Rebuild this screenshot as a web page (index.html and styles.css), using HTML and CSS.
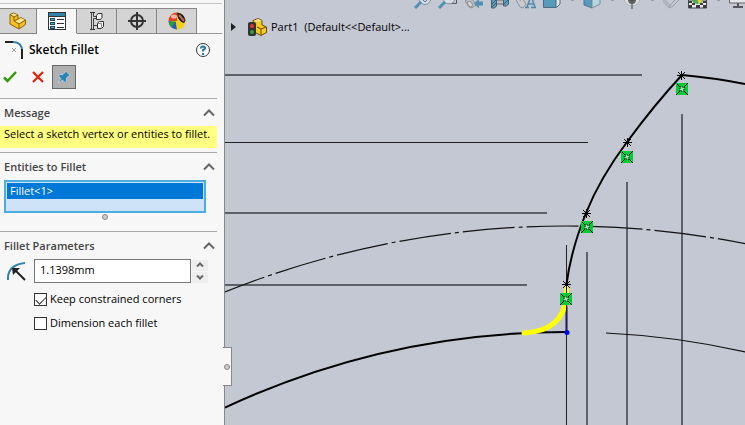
FILE: index.html
```html
<!DOCTYPE html>
<html lang="en">
<head>
<meta charset="utf-8">
<title>Sketch Fillet</title>
<link rel="stylesheet" href="styles.css">
</head>
<body>
<aside class="panel">
  <nav class="tabs" aria-label="Managers">
    <button class="tab" aria-label="Feature tree">
      <svg width="18" height="18" viewBox="0 0 18 18"><path d="M1 2.500L4.500 1 9 3v4l3-1.500L16.500 8v4.500L10 17 1 12z" fill="#f3c02a" stroke="#8a6205" stroke-linejoin="round"/><path d="M1.500 3l3-1.500L8.500 3 5 5zM6.500 9.500L12 6l4 2-5.500 3.500z" fill="#ffe590"/><path d="M1 2.500L5 5l4-2M5 5v4l5 3 6.500-4M10 12v5M9 7L5 9" fill="none" stroke="#8a6205"/></svg>
    </button>
    <button class="tab active" aria-label="Property manager">
      <svg width="18" height="18" viewBox="0 0 18 18"><rect x=".5" y=".5" width="17" height="17" fill="#fff" stroke="#333"/><path d="M1 1h16v3H1z" fill="#2f83ac"/><path d="M0 4.500h18" stroke="#333"/><path d="M2 6h5v3H2zM2 10h5v3H2zM2 14h5v3H2z" fill="#1f4a5f"/><path d="M3 7.500h3M3 11.500h3M3 15.500h3" stroke="#4aa5cd"/><path d="M9 7.500h7M9 11.500h7M9 15.500h7" stroke="#333"/></svg>
    </button>
    <button class="tab" aria-label="Configurations">
      <svg width="18" height="18" viewBox="0 0 18 18"><path d="M3.500 1v16M5.500 1v3.500H8M5.500 17V6.500H8M5.500 13.500h4" fill="none" stroke="#444"/><path d="M2 .5h5M2 17.500h5" stroke="#333"/><path d="M8.500 3.500l1.500-2h4v4l-1.500 2h-4zM9.500 11l2-1.500h4v5l-2 2h-4z" fill="#f2f2f2" stroke="#333"/><path d="M9.500 11.500h4v4" fill="none" stroke="#888"/></svg>
    </button>
    <button class="tab" aria-label="Dimensions">
      <svg width="18" height="18" viewBox="0 0 18 18"><circle cx="9" cy="9" r="6" fill="none" stroke="#333" stroke-width="2"/><path d="M9 0v18M0 9h18" stroke="#333" stroke-width="2"/></svg>
    </button>
    <button class="tab" aria-label="Display">
      <svg width="18" height="18" viewBox="0 0 18 18"><circle cx="9" cy="9" r="8.500" fill="#f6cf18"/><path d="M9 9V.5A8.500 8.500 0 0 0 .5 9z" fill="#d94328"/><path d="M.5 9A8.500 8.500 0 0 0 9 17.500L8 10z" fill="#2459c9"/><path d="M8 10l1 7.500q5 0 7.500-4L11 9z" fill="#f6cf18"/><path d="M.7 10L8 9.500 3.500 15.500Q1 13 .7 10z" fill="#2b9a38"/><path d="M9 .5q7 .5 8.500 8L16 11Q9 9 9 .5z" fill="#241414"/><path d="M11 3l5 6" stroke="#b87068" stroke-width="2"/><ellipse cx="6" cy="4.500" rx="3" ry="2" fill="#fff" opacity=".6"/></svg>
    </button>
  </nav>

  <header class="title">
    <svg width="20" height="20" viewBox="0 0 20 20"><path d="M1 2h9" stroke="#222" stroke-width="2"/><path d="M9 2q9 0 9 9" fill="none" stroke="#2f83ac" stroke-width="2"/><path d="M18 9v10" stroke="#222" stroke-width="2"/><path d="M8 8l4 4M12 8l-4 4" stroke="#999"/></svg>
    <h1>Sketch Fillet</h1>
    <button class="help" aria-label="Help">
      <svg width="14" height="14" viewBox="0 0 14 14"><circle cx="7" cy="7" r="6.500" fill="#fff" stroke="#333"/><path d="M5 5.500Q5 3.500 7 3.500t2 1.500Q9 6.500 7 7v1.500" fill="none" stroke="#2476a0" stroke-width="2"/><path d="M6 10h2v2H6z" fill="#2476a0"/></svg>
    </button>
  </header>

  <div class="actions">
    <button aria-label="OK"><svg width="14" height="12" viewBox="0 0 14 12"><path d="M1 6.500L4.500 10 13 1" fill="none" stroke="#2f9a08" stroke-width="2.500"/></svg></button>
    <button aria-label="Cancel"><svg width="12" height="12" viewBox="0 0 12 12"><path d="M1 1l10 10M11 1L1 11" stroke="#e02306" stroke-width="2.200"/></svg></button>
    <button class="pin" aria-label="Keep visible"><svg width="14" height="14" viewBox="0 0 14 14"><path d="M8.500 1l4.500 4.500-1.500.5L9.500 8v3l-1.500 1.500L5.500 10 1 13l3-4.500L1.500 6 3 4.500h3l2-2z" fill="#2884b3" stroke="#e0ecf2" stroke-width=".5"/></svg></button>
  </div>

  <section class="group">
    <button class="group-head">Message <svg class="chev" width="12" height="8" viewBox="0 0 12 8"><path d="M1 6.500l5-5 5 5"/></svg></button>
    <p class="message">Select a sketch vertex or entities to fillet.</p>
  </section>

  <section class="group">
    <button class="group-head">Entities to Fillet <svg class="chev" width="12" height="8" viewBox="0 0 12 8"><path d="M1 6.500l5-5 5 5"/></svg></button>
    <ul class="entities"><li>Fillet&lt;1&gt;</li></ul>
    <span class="grip"></span>
  </section>

  <section class="group">
    <button class="group-head">Fillet Parameters <svg class="chev" width="12" height="8" viewBox="0 0 12 8"><path d="M1 6.500l5-5 5 5"/></svg></button>
    <div class="radius">
      <svg width="20" height="20" viewBox="0 0 20 20"><path d="M2 19Q1 4 19 2" fill="none" stroke="#2f83ac" stroke-width="2"/><path d="M19 19L9 9" stroke="#222" stroke-width="2"/><path d="M6 7h8l-7 7z" fill="#222"/></svg>
      <input type="text" value="1.1398mm" aria-label="Fillet radius">
      <span class="spin">
        <button aria-label="Increase"><svg class="chev" width="8" height="6" viewBox="0 0 8 6"><path d="M1 4.500l3-3 3 3"/></svg></button>
        <button aria-label="Decrease"><svg class="chev" width="8" height="6" viewBox="0 0 8 6"><path d="M1 1.500l3 3 3-3"/></svg></button>
      </span>
    </div>
    <label class="check"><input type="checkbox" checked>Keep constrained corners</label>
    <label class="check"><input type="checkbox">Dimension each fillet</label>
  </section>
  <button class="handle" aria-label="Collapse panel"><span class="grip"></span></button>
</aside>

<main class="view">
  <svg class="sketch" aria-label="Sketch">
    <defs>
      <path id="star" d="M-4 .5H5M.5-4V5M-3-3L4 4M4-3L-3 4" stroke="#000"/>
      <g id="rel"><rect x="-6" y="-6" width="12" height="12" fill="#00cc33"/><path d="M-6 6l4-4M6-6L2-2M6 6L2 2M-5-5l3 3" stroke="#000"/><rect x="-2" y="-2" width="4" height="4" fill="#9fe0ae" stroke="#000" stroke-dasharray="1 1"/></g>
    </defs>
    <g transform="translate(-225 0)" fill="none">
      <path d="M225 75H642M225 213H547M225 285H527M587 252V2000M627 182V2000M682 114V2000" stroke="#5f6168" stroke-width="2"/>
      <path d="M225 142.500H588M566.500 245V2000" stroke="#222"/>
      <path d="M225 292A914 914 0 0 1 566 226A914 914 0 0 1 1400 766" stroke="#111" stroke-width="1.200" stroke-dasharray="52 4 4 4" stroke-dashoffset="10"/>
      <path d="M606 333A808 808 0 0 1 1300 800" stroke="#111" stroke-width="1.200"/>
      <path d="M225 407.500A808 808 0 0 1 567 332" stroke="#000" stroke-width="2"/>
      <path d="M745 84Q715 78 682 75Q655 104 627 142Q600 178 586 213Q571 250 566.500 284" stroke="#000" stroke-width="2"/>
      <path d="M566.500 284V332" stroke="#0a0a70" stroke-width="2"/>
      <path d="M566.500 288V297Q563 331 524 333" stroke="#ff0" stroke-width="5" stroke-linecap="round"/>
      <path d="M566.500 284V332" stroke="#222"/>
      <circle cx="567" cy="332.500" r="2.500" fill="#00f"/>
      <use href="#star" x="681" y="75"/><use href="#star" x="627" y="142"/><use href="#star" x="586" y="213"/><use href="#star" x="566" y="284"/>
      <use href="#rel" x="682" y="89"/><use href="#rel" x="627" y="157"/><use href="#rel" x="587" y="227"/><use href="#rel" x="566" y="299"/>
    </g>
  </svg>

  <div class="toolbar">
    <button aria-label="Zoom to fit"><svg width="18" height="18" viewBox="0 0 18 18"><circle cx="12" cy="8" r="5.500" fill="#d9dfe7" stroke="#7d858f"/><path d="M8 11l-6 6" stroke="#3f88ae" stroke-width="3"/><path d="M10 9l2 2 2-2" fill="none" stroke="#3f6f88"/></svg></button>
    <button aria-label="Zoom to area"><svg width="20" height="18" viewBox="0 0 20 18"><path d="M9 12.500h9.500V6" fill="none" stroke="#444"/><circle cx="11" cy="7" r="6" fill="#d9dfe7" stroke="#7d858f"/><path d="M7 11l-6 6" stroke="#3f88ae" stroke-width="3"/></svg></button>
    <button aria-label="Previous view"><svg width="18" height="18" viewBox="0 0 18 18"><path d="M0 10l6-4 5 8-4 3-3-1z" fill="#b9bcc2" stroke="#85898f"/><ellipse cx="5" cy="13" rx="2" ry="3" fill="#ddd" stroke="#888" transform="rotate(-35 5 13)"/><path d="M9 12.500l5-5v3h4v4h-4v3z" fill="#3f88ae"/></svg></button>
    <button aria-label="Section view"><svg width="18" height="18" viewBox="0 0 18 18"><path d="M5 9h8v4H5z" fill="#b9bcc2" stroke="#555"/><path d="M.5 6h5v9l-2 2h-3zM12.500 6h5v7l-2 2h-3z" fill="#4a94b9" stroke="#2c4f61"/><path d="M1 13l4-4M1 16l4-4M13 13l4-4" stroke="#2c4f61"/></svg></button>
    <button aria-label="Dynamic annotation views"><svg width="20" height="18" viewBox="0 0 20 18"><path d="M0 9l5-4 5 8-3 4-3-1z" fill="#c9cbd0" stroke="#85898f"/><path d="M1 8l3-1 1 3z" fill="#d65b3c"/><path d="M9 16.500h4M15 16.500h5M11 16l4-11 4 11M12.500 13h5" fill="none" stroke="#3a7fa5" stroke-width="1.500"/></svg></button>
    <button aria-label="View orientation"><svg width="18" height="18" viewBox="0 0 18 18"><path d="M12 2h5v11l-3 3h-2z" fill="#e7e9ed" stroke="#555"/><path d="M.5 3.500h12.500v13H.5z" fill="#4592b9" stroke="#2f5f78"/></svg></button>
    <i></i>
    <button aria-label="Display style"><svg width="18" height="18" viewBox="0 0 18 18"><path d="M1 2h8v15l-8-3z" fill="#4592b9" stroke="#3b6d86"/><path d="M9 2h8v11l-8 4z" fill="#b8d8e6" stroke="#6d8492"/></svg></button>
    <i></i>
    <button aria-label="Hide or show items"><svg width="18" height="18" viewBox="0 0 18 18"><circle cx="9" cy="7" r="8" fill="#e4e4e6" stroke="#a9acb3"/><circle cx="9" cy="9" r="4" fill="#555"/><path d="M9 7v11M6 9h6" stroke="#333"/></svg></button>
    <i></i>
    <button aria-label="Edit appearance"><svg width="18" height="18" viewBox="0 0 18 18"><path d="M0 9l7 7" stroke="#adb0b8" stroke-width="4"/><path d="M6 17l2-4 8-8 2 2-8 8z" fill="#c2c5cc" stroke="#989ba4"/></svg></button>
    <button aria-label="Apply scene"><svg width="20" height="18" viewBox="0 0 20 18"><path d="M.5 9h18v8H.5z" fill="#eee" stroke="#333"/><path d="M1 10h3v2H1zM15 10h3v2h-3zM4 12h3v2H4zM12 12h3v2h-3zM1 14h3v3H1zM8 14h4v3H8zM15 14h3v3h-3z" fill="#222"/><circle cx="9.500" cy="7" r="6" fill="#38a83e"/><path d="M9 7h6.500q-2 5-5 6z" fill="#e9d02a"/></svg></button>
    <i></i>
    <button aria-label="View settings"><svg width="18" height="18" viewBox="0 0 18 18"><path d="M.5 1h17v11H.5z" fill="#e9ebee" stroke="#555"/><path d="M9 12v4M4 16h10" stroke="#444" stroke-width="2"/></svg></button>
  </div>

  <div class="tree">
    <svg width="6" height="8" viewBox="0 0 6 8"><path d="M0 0l5 4-5 4z" fill="#222"/></svg>
    <svg width="19" height="18" viewBox="0 0 19 18"><path d="M5 2.500L10 .5l4 2V7l4.500 2v5.500L13 17.500l-6-3z" fill="#f4ca25" stroke="#6b4b05"/><path d="M5.500 3L10 1l3.500 1.500L10 4z" fill="#ffe890"/><path d="M9 9l4 2 5-2M13 11v6" fill="none" stroke="#6b4b05"/><rect x="0" y="4" width="8" height="14" rx="2" fill="#333"/><circle cx="4" cy="8" r="2" fill="#e23a30"/><circle cx="4" cy="14" r="2" fill="#35a040"/></svg>
    <span>Part1&nbsp; (Default&lt;&lt;Default&gt;...</span>
  </div>
</main>
</body>
</html>
```
FILE: styles.css
```css
* { box-sizing: border-box; }

body {
  margin: 0;
  min-height: 100vh;
  display: flex;
  font: 11px/16px "Open Sans", "Noto Sans", sans-serif;
  color: #000;
  background: #c4c8d3;
}

button { font: inherit; color: inherit; border: 0; padding: 0; background: none; }
svg { display: block; flex: none; }

.panel {
  position: relative;
  z-index: 1;
  width: 225px;
  flex: none;
  background: #f7f7f7;
  border-right: 1px solid #888;
  padding-top: 3px;
}

.tabs {
  display: flex;
  margin-right: 2px;
  padding-top: 4px;
  border-top: 1px solid #c4c4c4;
  box-shadow: inset 0 -1px #999;
}
.tab {
  display: flex;
  align-items: center;
  justify-content: center;
  width: 40px;
  height: 26px;
  background: #d4d4d4;
  border: 1px solid #888;
  border-left: 0;
}
.tab:first-child { width: 37px; }
.tab.active { background: #f7f7f7; border-bottom-color: #f7f7f7; }

.title { display: flex; align-items: center; padding: 6px 14px 0 4px; }
.title h1 { flex: 1; margin: 0 0 0 5px; font-size: 12px; font-weight: 600; }
.help { margin-bottom: 1px; }

.actions { display: flex; align-items: center; padding: 5px 3px 9px; }
.actions button + button { margin-left: 15px; }
.actions .pin {
  display: grid;
  place-items: center;
  width: 24px;
  height: 24px;
  margin-left: 8px;
  background: #b0b0b0;
  border: 1px solid #666;
}
.actions .pin:last-child { margin-left: 8px; }

.group { margin-right: 7px; border-top: 1px solid #aaa; }
.group-head {
  display: flex;
  align-items: center;
  justify-content: space-between;
  width: 100%;
  height: 23px;
  padding: 5px 2px 0 4px;
  font-weight: 600;
  color: #444;
}
.chev { fill: none; stroke: #666; stroke-width: 2; }

.message {
  margin: 4px 0;
  padding: 0 4px 6px;
  white-space: nowrap;
  background: #ffff80;
}

.entities {
  height: 33px;
  margin: 4px 11px 1px 4px;
  padding: 1px;
  list-style: none;
  background: #cfe3f8;
  border: 2px solid #4aaee3;
}
.entities li { padding: 0 3px; color: #fff; background: #0078d7; }

.grip {
  display: block;
  width: 6px;
  height: 6px;
  background: #ccc;
  border: 1px solid #888;
  border-radius: 50%;
}
.group .grip { margin: 0 auto 11px 102px; }

.radius { display: flex; align-items: center; height: 24px; margin: 4px 0 8px 6px; }
.radius input {
  width: 157px;
  height: 24px;
  margin-left: 8px;
  padding: 0 5px 3px;
  font: inherit;
  border: 1px solid #777;
  background: #fff;
}
.spin { display: grid; gap: 1px; margin-left: 1px; }
.spin button { display: grid; place-items: center; width: 16px; height: 11px; background: #eee; }

.check { display: flex; align-items: center; gap: 3px; margin: 0 0 8px 34px; }
.check input {
  appearance: none;
  width: 13px;
  height: 13px;
  margin: 0;
  border: 1px solid #333;
  background: #fff;
}
.check input:checked::after {
  content: "";
  display: block;
  width: 9px;
  height: 5px;
  margin: 2px 1px;
  border: solid #333;
  border-width: 0 0 1px 1px;
  transform: rotate(-45deg);
}

.handle {
  position: absolute;
  top: 347px;
  left: 100%;
  width: 9px;
  height: 39px;
  margin-left: -1px;
  background: #f7f7f7;
  border: 1px solid #888;
  border-left: 0;
  padding-left: 1px;
}

.view { position: relative; flex: 1; min-width: 0; overflow: hidden; }
.sketch { position: absolute; inset: 0; width: 100%; height: 100%; }

.toolbar {
  position: relative;
  display: flex;
  margin: -9px 0 0 184px;
  opacity: .85;
}
.toolbar button { display: grid; place-items: center; flex: none; width: 26px; height: 18px; }
.toolbar i { flex: none; width: 14px; height: 10px; }
.toolbar i::after { content: ""; display: block; width: 3px; height: 2px; margin: 8px auto 0; background: #9296a0; }

.tree {
  position: relative;
  display: flex;
  align-items: center;
  margin: 9px 0 0 6px;
  gap: 4px;
}
.tree svg:first-child { margin-right: 7px; }
```
